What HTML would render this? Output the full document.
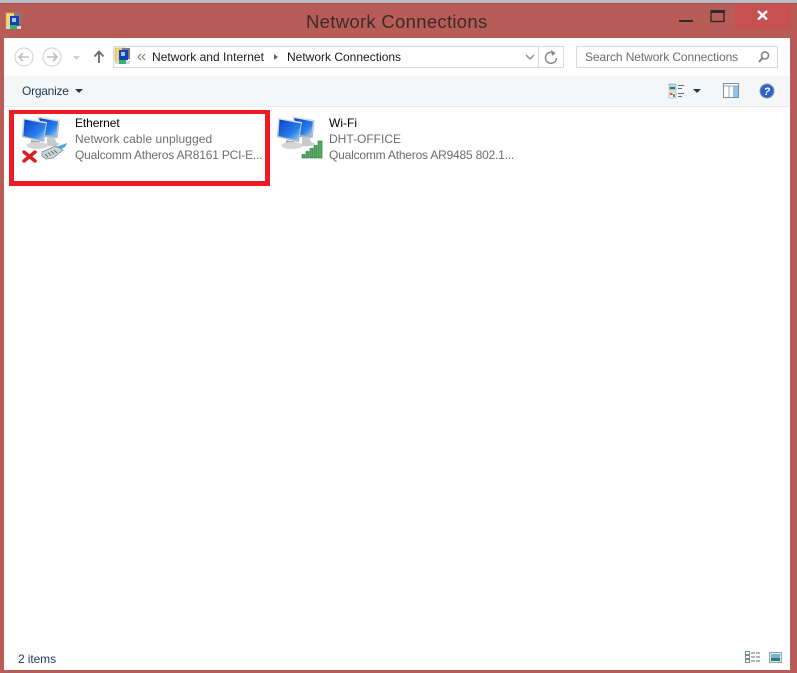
<!DOCTYPE html>
<html><head><meta charset="utf-8">
<style>
html,body{margin:0;padding:0;width:797px;height:673px;overflow:hidden;background:#b85c58;font-family:"Liberation Sans",sans-serif;}
.a{position:absolute;white-space:nowrap;}
svg{position:absolute;left:0;top:0;}
</style></head>
<body>
<div class="a" style="left:0;top:0;width:797px;height:3px;background:#b9bcc2"></div>
<div class="a" style="left:0;top:3px;width:797px;height:1px;background:#a8524f"></div>
<div class="a" style="left:735px;top:4px;width:56px;height:25px;background:#c75050"></div>
<div class="a" style="left:4px;top:38px;width:786px;height:632px;background:#fff"></div>
<div class="a" style="left:4px;top:76px;width:786px;height:30px;background:#f5f6f7"></div>
<div class="a" style="left:4px;top:106px;width:786px;height:1px;background:#e8e9ea"></div>

<div class="a" style="left:113px;top:46px;width:449px;height:20px;border:1px solid #d9d9d9;background:#fff"></div>
<div class="a" style="left:538px;top:47px;width:1px;height:20px;background:#d9d9d9"></div>
<div class="a" style="left:576px;top:46px;width:200px;height:20px;border:1px solid #d9d9d9;background:#fff"></div>

<div class="a" style="left:306px;top:10px;font-size:18.5px;line-height:24px;color:#3c2a2a;letter-spacing:.3px">Network Connections</div>
<div class="a" style="left:152px;top:50px;font-size:12px;line-height:14px;color:#1a1a1a;letter-spacing:.03px">Network and Internet</div>
<div class="a" style="left:287px;top:50px;font-size:12px;line-height:14px;color:#1a1a1a">Network Connections</div>
<div class="a" style="left:585px;top:50px;font-size:12px;line-height:14px;color:#6d6d6d;letter-spacing:-.09px">Search Network Connections</div>
<div class="a" style="left:22px;top:84px;font-size:12px;line-height:14px;color:#1e395b;letter-spacing:-.25px">Organize</div>

<div class="a" style="left:75px;top:116px;font-size:12px;line-height:14px;color:#000;letter-spacing:-.1px">Ethernet</div>
<div class="a" style="left:75px;top:132px;font-size:12px;line-height:14px;color:#6d6d6d;letter-spacing:.08px">Network cable unplugged</div>
<div class="a" style="left:75px;top:148px;font-size:12px;line-height:14px;color:#6d6d6d;letter-spacing:-.19px">Qualcomm Atheros AR8161 PCI-E...</div>
<div class="a" style="left:329px;top:116px;font-size:12px;line-height:14px;color:#000">Wi-Fi</div>
<div class="a" style="left:329px;top:132px;font-size:12px;line-height:14px;color:#6d6d6d">DHT-OFFICE</div>
<div class="a" style="left:329px;top:148px;font-size:12px;line-height:14px;color:#6d6d6d;letter-spacing:-.2px">Qualcomm Atheros AR9485 802.1...</div>
<div class="a" style="left:18px;top:652px;font-size:12px;line-height:14px;color:#1e395b;letter-spacing:-.1px">2 items</div>

<div class="a" style="left:9px;top:110px;width:251px;height:67px;border:5px solid #ed1c24;border-top-width:4px"></div>

<svg width="797" height="673" viewBox="0 0 797 673">
<defs>
<linearGradient id="sc" x1="0" y1="0" x2="1" y2="1"><stop offset="0" stop-color="#0a3fc8"/><stop offset=".65" stop-color="#2a80ec"/><stop offset="1" stop-color="#a8d8f8"/></linearGradient>
<linearGradient id="fr" x1="0" y1="0" x2="0" y2="1"><stop offset="0" stop-color="#dfe5e8"/><stop offset="1" stop-color="#a9b2b8"/></linearGradient>
<g id="pc">
<path d="M15 2 L38 6 L35.500 24 L22 23Z" fill="url(#fr)"/>
<path d="M17 4 L36 7.500 L34 22 L22 21Z" fill="url(#sc)"/>
<path d="M25 23 L33 24 L34 28 L38 30 Q34 33 25 32Z" fill="#c6cacb"/>
<path d="M1 4 L25 8 L22 28 L0 23Z" fill="url(#fr)"/>
<path d="M2.500 5.500 L24 9.500 L20.800 26 L1.500 22Z" fill="url(#sc)"/>
<path d="M9 26 L18 27.500 L18 31 L9 31Z" fill="#a3aaad"/>
<ellipse cx="15" cy="31.500" rx="10.500" ry="3.500" fill="#d4d6d6"/>
</g>
</defs>

<!-- title icon -->
<rect x="6" y="13" width="12" height="15" fill="#f3d679" stroke="#c9a63a" stroke-width=".6"/>
<rect x="14" y="13" width="7" height="11" fill="#7a7f86"/>
<rect x="10" y="16" width="9" height="10" fill="#1640b0"/>
<rect x="12" y="18" width="4" height="4" fill="#9cc8f5"/>
<rect x="6" y="26" width="15" height="3" fill="#d5d8d8"/>
<rect x="10" y="25" width="7" height="4" fill="#2fb673"/>

<!-- window buttons -->
<rect x="679" y="20" width="14" height="2" fill="#302a2a"/>
<rect x="711" y="11" width="13" height="10.500" fill="none" stroke="#302a2a" stroke-width="1.400"/>
<rect x="711" y="10" width="14" height="3" fill="#302a2a"/>
<path d="M758 11 L767 19.500 M767 11 L758 19.500" stroke="#fff" stroke-width="2.400"/>

<!-- nav -->
<circle cx="24" cy="57" r="9" fill="#fff" stroke="#d6d6d6" stroke-width="1.200"/>
<path d="M29 57 H19 M23 53 L19 57 L23 61" fill="none" stroke="#bfbfbf" stroke-width="1.600"/>
<circle cx="52" cy="57" r="9" fill="#fff" stroke="#d6d6d6" stroke-width="1.200"/>
<path d="M47 57 H57 M53 53 L57 57 L53 61" fill="none" stroke="#bfbfbf" stroke-width="1.600"/>
<path d="M73 56 H80 L76.500 60Z" fill="#d0d0d0"/>
<path d="M99 63 V53 M94.500 56.500 L99 51.500 L103.500 56.500" fill="none" stroke="#6a6a6a" stroke-width="1.800"/>

<!-- address -->
<rect x="115" y="48" width="11" height="14" fill="#f3d679" stroke="#c9a63a" stroke-width=".6"/>
<rect x="122" y="48" width="8" height="11" fill="#7a7f86"/>
<rect x="119" y="50" width="9" height="10" fill="#1640b0"/>
<rect x="121" y="52" width="4" height="4" fill="#9cc8f5"/>
<rect x="115" y="61" width="15" height="3" fill="#d5d8d8"/>
<rect x="119" y="60" width="7" height="4" fill="#2fb673"/>
<path d="M141 54 L138 57 L141 60 M145 54 L142 57 L145 60" fill="none" stroke="#777" stroke-width="1"/>
<path d="M274 54 L278 57 L274 60Z" fill="#666"/>
<path d="M526 55 L530 59 L534 55" fill="none" stroke="#888" stroke-width="1.300"/>
<path d="M555 54 A5.500 5.500 0 1 0 556.500 58" fill="none" stroke="#8a8a8a" stroke-width="1.500"/>
<path d="M551 50 L555.500 53 L552 56Z" fill="#8a8a8a"/>

<!-- search -->
<circle cx="765" cy="55.500" r="3.500" fill="none" stroke="#808080" stroke-width="1.500"/>
<path d="M762.500 58 L759 62" stroke="#808080" stroke-width="2"/>

<!-- organize arrow -->
<path d="M75 89 H83 L79 93Z" fill="#1e395b"/>

<!-- view icon -->
<rect x="669" y="84" width="7" height="6" fill="#bcd7e3" stroke="#8ea3ad" stroke-width=".6"/>
<rect x="670" y="87" width="5" height="2" fill="#2f7d5f"/>
<rect x="669" y="92" width="7" height="6" fill="#f4f4f4" stroke="#8ea3ad" stroke-width=".6"/>
<rect x="670" y="93" width="2.500" height="2" fill="#d65a2f"/>
<rect x="673" y="94" width="2" height="3" fill="#5aa84a"/>
<path d="M678 85.500 H684 M678 88.500 H682 M678 93.500 H684 M678 96.500 H682" stroke="#60707c" stroke-width="1"/>
<path d="M693 89 H701 L697 93Z" fill="#1e395b"/>
<!-- pane icon -->
<rect x="723.500" y="83.500" width="15" height="14" fill="#fff" stroke="#7d93a3"/>
<rect x="733" y="86" width="5" height="11" fill="#8ec3f0"/>
<path d="M723 86 H739 M729 86 V97" stroke="#7d93a3" stroke-width=".8"/>
<!-- help -->
<circle cx="767" cy="91" r="7" fill="#2f62c8" stroke="#8f9aa6" stroke-width="1"/>
<text x="767" y="95" font-family="Liberation Sans" font-size="11" font-weight="bold" font-style="italic" fill="#fff" text-anchor="middle">?</text>

<!-- ethernet icon -->
<use href="#pc" x="22" y="114"/>
<path d="M24 152 L35 161 M35 152 L24 161" stroke="#d81e1e" stroke-width="3.400" stroke-linecap="round"/>
<path d="M42 152 L56 146 L63 150 L53 158 L46 159 L42 156Z" fill="#cfd6d8" stroke="#7d8a8f" stroke-width=".8"/>
<path d="M45 154 L48 157 M48 152.500 L51 155.500 M51 151 L54 154 M54 150 L57 153" stroke="#5f6d72" stroke-width="1"/>
<path d="M56 147 L67 143 L65 147 L61 149Z" fill="#3fa9e0"/>

<!-- wifi icon -->
<use href="#pc" x="277" y="114"/>
<g fill="#56ad62" stroke="#1f6a2c" stroke-width=".6">
<rect x="302" y="154.500" width="3" height="3.500"/>
<rect x="306" y="151.500" width="3" height="6.500"/>
<rect x="310" y="148.500" width="3" height="9.500"/>
<rect x="314" y="145.500" width="3" height="12.500"/>
<rect x="318" y="141" width="4" height="17"/>
</g>

<!-- status icons -->
<g fill="#fff" stroke="#7f8b94" stroke-width="1">
<rect x="745.500" y="651.500" width="4" height="3"/><rect x="745.500" y="655.500" width="4" height="3"/><rect x="745.500" y="659.500" width="4" height="3"/>
</g>
<path d="M751 653 H760 M751 657 H760 M751 661 H760" stroke="#5d6a74" stroke-width="1" stroke-dasharray="4 1"/>
<rect x="769.500" y="652.500" width="12" height="10" fill="#dce8f0" stroke="#8ea3b3"/>
<rect x="771" y="654" width="9" height="7" fill="#7fb0cc"/>
<rect x="771" y="658" width="9" height="3" fill="#2f7d6a"/>
</svg>
</body></html>
